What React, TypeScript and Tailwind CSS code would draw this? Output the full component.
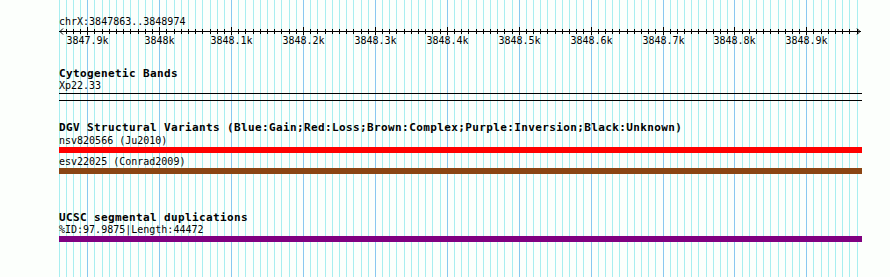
const MINOR = "#a8eef0";
const MAJOR = "#88c8f0";

// 10 bp per minor step, major every 100 bp
const ks = Array.from({ length: 111 }, (_, i) => i - 3);
const xAt = (k: number) => Math.round(87.3 + 7.19 * k);

const labels = [
  "3847.9k",
  "3848k",
  "3848.1k",
  "3848.2k",
  "3848.3k",
  "3848.4k",
  "3848.5k",
  "3848.6k",
  "3848.7k",
  "3848.8k",
  "3848.9k",
];

function Grid() {
  return (
    <svg className="absolute inset-0" width={890} height={277} shapeRendering="crispEdges">
      <rect x={59} y={0} width={1} height={277} fill={MINOR} />
      {ks.map((k) => (
        <rect key={k} x={xAt(k)} y={0} width={1} height={277} fill={k % 10 === 0 ? MAJOR : MINOR} />
      ))}
    </svg>
  );
}

function Ruler() {
  const ox = 59;
  return (
    <svg width={803} height={19} className="block" shapeRendering="crispEdges">
      <rect x={0} y={4} width={802} height={1} fill="#000" />
      <path d="M4 1.5 L1 4.5 L4 7.5" stroke="#000" fill="none" shapeRendering="auto" />
      <path d="M798 1.5 L801 4.5 L798 7.5" stroke="#000" fill="none" shapeRendering="auto" />
      {ks.map((k) => {
        const major = k % 10 === 0;
        return (
          <rect
            key={k}
            x={xAt(k) - ox}
            y={major ? 0 : 2}
            width={1}
            height={major ? 8 : 5}
            fill="#000"
          />
        );
      })}
      {labels.map((t, i) => (
        <text
          key={t}
          x={xAt(i * 10) - ox + 0.5}
          y={16.8}
          textAnchor="middle"
          fontSize={10}
          fontFamily="'DejaVu Sans Mono', monospace"
          fill="#000"
        >
          {t}
        </text>
      ))}
    </svg>
  );
}

function TrackTitle({ children, className = "" }: { children: React.ReactNode; className?: string }) {
  return (
    <div className={`text-[11px] leading-[12px] font-bold tracking-[0.38px] whitespace-nowrap ${className}`}>
      {children}
    </div>
  );
}

function Label({ children, className = "" }: { children: React.ReactNode; className?: string }) {
  return <div className={`text-[10px] leading-[11px] whitespace-nowrap ${className}`}>{children}</div>;
}

export default function App() {
  return (
    <div className="relative w-[890px] h-[277px] overflow-hidden bg-[#fcfffc] text-black font-['DejaVu_Sans_Mono',monospace]">
      <Grid />
      <div className="relative ml-[59px] w-[803px] pt-[16px]">
        <Label>chrX:3847863..3848974</Label>
        <Ruler />

        <TrackTitle className="mt-[22px]">Cytogenetic Bands</TrackTitle>
        <Label>Xp22.33</Label>
        <div className="mt-[2px] h-[8px] border-y border-black" />

        <TrackTitle className="mt-[21px]">
          DGV Structural Variants (Blue:Gain;Red:Loss;Brown:Complex;Purple:Inversion;Black:Unknown)
        </TrackTitle>
        <Label className="mt-[1px]">nsv820566 (Ju2010)</Label>
        <div className="mt-[1px] h-[6px] bg-[#ff0000]" />
        <Label className="mt-[3px]">esv22025 (Conrad2009)</Label>
        <div className="mt-[1px] h-[6px] bg-[#8b4513]" />

        <TrackTitle className="mt-[38px]">UCSC segmental duplications</TrackTitle>
        <Label>%ID:97.9875|Length:44472</Label>
        <div className="mt-[1px] h-[6px] bg-[#800080]" />
      </div>
    </div>
  );
}
